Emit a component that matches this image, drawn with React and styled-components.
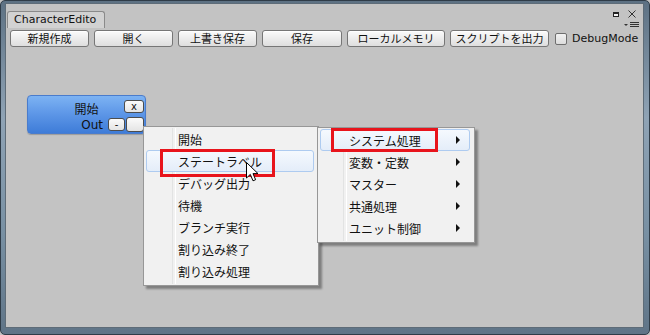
import React from 'react';
import styled, { createGlobalStyle } from 'styled-components';

const GlobalStyle = createGlobalStyle`
  html, body {
    margin: 0;
    padding: 0;
    background: #c3c3c3;
  }
  * {
    box-sizing: border-box;
  }
`;

const toolbarButtons = [
  { label: '新規作成', w: 79 },
  { label: '開く', w: 79 },
  { label: '上書き保存', w: 79 },
  { label: '保存', w: 80 },
  { label: 'ローカルメモリ', w: 98 },
  { label: 'スクリプトを出力', w: 99 },
];

const mainMenu = ['開始', 'ステートラベル', 'デバッグ出力', '待機', 'ブランチ実行', '割り込み終了', '割り込み処理'];
const subMenu = ['システム処理', '変数・定数', 'マスター', '共通処理', 'ユニット制御'];

const App = () => {
  return (
    <>
      <GlobalStyle />
      <Frame>
        <Panel>
          <TabBar>
            <Tab>CharacterEdito</Tab>
            <WindowControls>
              <ControlRow>
                <svg width="6" height="5" viewBox="0 0 6 5">
                  <rect x="0.5" y="0.5" width="5" height="4" fill="#f4f4f4" stroke="#222" />
                  <rect x="0" y="0" width="6" height="2" fill="#222" />
                </svg>
                <svg width="8" height="8" viewBox="0 0 8 8">
                  <path d="M0.5 0.5 L7.5 7.5 M7.5 0.5 L0.5 7.5" stroke="#333" strokeWidth="1" />
                </svg>
              </ControlRow>
              <MenuIconRow>
                <svg width="15" height="6" viewBox="0 0 15 6">
                  <path d="M0 2 L4 2 L2 4 Z" fill="#333" />
                  <rect x="6" y="0" width="9" height="1" fill="#333" />
                  <rect x="6" y="2" width="9" height="1" fill="#333" />
                  <rect x="6" y="4" width="9" height="1" fill="#333" />
                </svg>
              </MenuIconRow>
            </WindowControls>
          </TabBar>

          <Toolbar>
            {toolbarButtons.map((b) => (
              <ToolButton key={b.label} $w={b.w}>{b.label}</ToolButton>
            ))}
            <CheckLabel>
              <CheckBox />
              DebugMode
            </CheckLabel>
          </Toolbar>

          <Canvas>
            <Node>
              <NodeHeader>
                <NodeTitle>開始</NodeTitle>
                <NodeButton $w={20}>x</NodeButton>
              </NodeHeader>
              <NodePort>
                <PortLabel>Out</PortLabel>
                <NodeButton $w={17}>-</NodeButton>
                <NodeButton $w={18} />
              </NodePort>
            </Node>

            <Menu $left={137} $top={79} $width={176} $gutter={28}>
              {mainMenu.map((label, i) => (
                <MenuItem key={label} $active={i === 1} $indent={31}>
                  {label}
                </MenuItem>
              ))}
            </Menu>

            <Menu $left={311} $top={80} $width={158} $gutter={25}>
              {subMenu.map((label, i) => (
                <MenuItem key={label} $active={i === 0} $indent={28}>
                  {label}
                  <Arrow />
                </MenuItem>
              ))}
            </Menu>

            <Highlight $left={154} $top={102} $width={115} $height={28} />
            <Highlight $left={325} $top={81} $width={107} $height={24} />

            <Cursor width="13" height="20" viewBox="0 0 13 20">
              <path
                d="M0.5 0.5 L0.5 16 L4.3 12.4 L7 18.8 L9.6 17.7 L7 11.6 L12 11.6 Z"
                fill="#fff"
                stroke="#000"
                strokeWidth="1"
                strokeLinejoin="miter"
              />
            </Cursor>
          </Canvas>
        </Panel>
      </Frame>
    </>
  );
};

export default App;

const Frame = styled.div`
  width: 650px;
  height: 335px;
  padding: 2px 5px 6px 4px;
  background: linear-gradient(180deg, #5d7183 0%, #8fa3b5 35%, #7890a3 70%, #5f7487 100%);
  border: 1px solid #2f3c48;
  border-radius: 5px;
  display: flex;
`;

const Panel = styled.div`
  flex: 1;
  display: flex;
  flex-direction: column;
  background: #c3c3c3;
  border: 1px solid #5e6c78;
  overflow: hidden;
`;

const TabBar = styled.div`
  height: 24px;
  display: flex;
  align-items: flex-end;
  padding-left: 1px;
`;

const Tab = styled.div`
  width: 98px;
  height: 17px;
  padding: 1px 0 0 6px;
  background: #d2d2d2;
  border: 1px solid #8a8a8a;
  border-bottom: none;
  border-radius: 3px 3px 0 0;
  font-family: 'DejaVu Sans', sans-serif;
  font-size: 11px;
  line-height: 14px;
  color: #111;
`;

const WindowControls = styled.div`
  margin-left: auto;
  align-self: stretch;
  display: flex;
  flex-direction: column;
  align-items: flex-end;
  padding-top: 6px;
`;

const ControlRow = styled.div`
  display: flex;
  align-items: center;
  gap: 9px;
  padding-right: 7px;
  height: 8px;
`;

const MenuIconRow = styled.div`
  display: flex;
  padding-right: 4px;
  margin-top: 4px;
`;

const Toolbar = styled.div`
  display: flex;
  align-items: center;
  gap: 5px;
  padding: 2px 0 0 4px;
  height: 19px;
`;

const ToolButton = styled.button`
  width: ${(p) => p.$w}px;
  height: 17px;
  padding: 0;
  border: 1px solid #767676;
  border-radius: 3px;
  background: linear-gradient(180deg, #fbfbfb 0%, #ececec 50%, #dedede 100%);
  box-shadow: inset 0 1px 0 #fff;
  font-family: 'Noto Sans CJK JP', sans-serif;
  font-size: 11px;
  line-height: 15px;
  color: #111;
`;

const CheckLabel = styled.label`
  display: flex;
  align-items: center;
  gap: 5px;
  margin-left: 1px;
  font-family: 'DejaVu Sans', sans-serif;
  font-size: 11px;
  color: #111;
`;

const CheckBox = styled.span`
  width: 12px;
  height: 12px;
  border: 1px solid #6f6f6f;
  border-radius: 2px;
  background: linear-gradient(180deg, #f2f2f2, #dcdcdc);
`;

const Canvas = styled.div`
  flex: 1;
  position: relative;
`;

const Node = styled.div`
  position: absolute;
  left: 21px;
  top: 48px;
  width: 119px;
  height: 39px;
  padding: 2px 1px 0 1px;
  border: 1px solid #4a7ccc;
  border-radius: 4px;
  background: linear-gradient(180deg, #7db3f3 0%, #5f98e8 45%, #3e7cd8 100%);
  box-shadow: 0 1px 1px rgba(0, 0, 0, 0.2);
  display: flex;
  flex-direction: column;
  gap: 6px;
`;

const NodeHeader = styled.div`
  display: grid;
  grid-template-columns: 20px 1fr 20px;
  align-items: center;
  height: 13px;
`;

const NodeTitle = styled.span`
  grid-column: 2;
  text-align: center;
  font-family: 'Noto Sans CJK JP', sans-serif;
  font-size: 12px;
  line-height: 13px;
  color: #111;
  margin-top: 4px;
`;

const NodeButton = styled.span`
  width: ${(p) => p.$w}px;
  height: ${(p) => (p.children ? 13 : 15)}px;
  display: flex;
  align-items: center;
  justify-content: center;
  border: 1px solid #4d4d4d;
  border-radius: 3px;
  background: linear-gradient(180deg, #fbfbfb 0%, #e4e4e4 100%);
  font-family: 'DejaVu Sans', sans-serif;
  font-size: 10px;
  color: #111;
`;

const NodePort = styled.div`
  display: flex;
  align-items: center;
  justify-content: flex-end;
  gap: 1px;
  height: 15px;
`;

const PortLabel = styled.span`
  font-family: 'DejaVu Sans', sans-serif;
  font-size: 12px;
  color: #111;
  margin-right: 4px;
`;

const Menu = styled.div`
  position: absolute;
  left: ${(p) => p.$left}px;
  top: ${(p) => p.$top}px;
  width: ${(p) => p.$width}px;
  padding: 1px 4px 3px 2px;
  background: #f1f1f1;
  border: 1px solid #979797;
  box-shadow: 3px 3px 2px rgba(0, 0, 0, 0.35);
  display: flex;
  flex-direction: column;

  &::before {
    content: '';
    position: absolute;
    top: 1px;
    bottom: 1px;
    left: ${(p) => p.$gutter}px;
    width: 2px;
    border-left: 1px solid #e2e3e3;
    border-right: 1px solid #ffffff;
  }
`;

const MenuItem = styled.div`
  position: relative;
  display: flex;
  align-items: center;
  height: 22px;
  padding: 0 9px 0 ${(p) => p.$indent}px;
  border: 1px solid ${(p) => (p.$active ? '#aecbf0' : 'transparent')};
  border-radius: 3px;
  background: ${(p) => (p.$active ? 'linear-gradient(180deg, #f5f9fe 0%, #e4edf9 100%)' : 'transparent')};
  font-family: 'Noto Sans CJK JP', sans-serif;
  font-size: 12px;
  color: #111;
  white-space: nowrap;
`;

const Arrow = styled.span`
  margin-left: auto;
  width: 0;
  height: 0;
  border-top: 4px solid transparent;
  border-bottom: 4px solid transparent;
  border-left: 4px solid #111;
`;

const Highlight = styled.div`
  position: absolute;
  left: ${(p) => p.$left}px;
  top: ${(p) => p.$top}px;
  width: ${(p) => p.$width}px;
  height: ${(p) => p.$height}px;
  border: 3px solid #e8141c;
  pointer-events: none;
`;

const Cursor = styled.svg`
  position: absolute;
  left: 240px;
  top: 115px;
`;
